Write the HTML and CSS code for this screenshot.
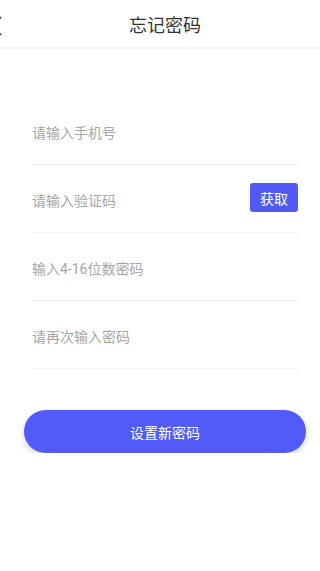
FILE: index.html
```html
<!DOCTYPE html>
<html lang="zh-CN">
<head>
    <meta charset="UTF-8">
    <title>忘记密码</title>
    <link rel="stylesheet" href="styles.css">
</head>
<body>
    <div class="topbar">
        <a class="back" href="#">
            <svg width="12" height="20" viewBox="0 0 12 20"><path d="M10 1 L1.5 10 L10 19" fill="none" stroke="#333" stroke-width="1.6"/></svg>
        </a>
        <h1>忘记密码</h1>
        <span></span>
    </div>

    <form class="form">
        <div class="row">
            <input type="tel" placeholder="请输入手机号">
        </div>
        <div class="row">
            <input type="text" placeholder="请输入验证码">
            <button type="button" class="code-btn">获取</button>
        </div>
        <div class="row">
            <input type="password" placeholder="输入4-16位数密码">
        </div>
        <div class="row">
            <input type="password" placeholder="请再次输入密码">
        </div>
        <button type="button" class="submit">设置新密码</button>
    </form>
</body>
</html>
```

FILE: styles.css
```css
body { margin: 0; background: #fff; font-family: Roboto, "Noto Sans CJK SC", sans-serif; color: #333; }

.topbar {
    height: 47px;
    border-bottom: 2px solid #f5f5f5;
    display: grid;
    grid-template-columns: 40px 1fr 40px;
    align-items: center;
}
.topbar h1 { margin: 0; padding: 4px 0 0 10px; font-size: 18px; font-weight: normal; text-align: center; line-height: 24px; }
.back { display: flex; margin-left: -9px; margin-top: 4px; }

.form { margin-top: 48px; padding: 0 22px 0 32px; }
.row {
    height: 68px;
    box-sizing: border-box;
    padding-top: 4px;
    display: flex;
    align-items: center;
    border-bottom: 1px solid #f3f3f3;
}
.row input {
    flex: 1;
    min-width: 0;
    border: none;
    outline: none;
    padding: 0;
    font-family: inherit;
    font-size: 14px;
    color: #333;
    background: transparent;
}
.row input::placeholder { color: #a6a6a6; }

.code-btn {
    width: 48px;
    height: 29px;
    border: none;
    border-radius: 3px;
    background: #5159f6;
    color: #fff;
    font-family: inherit;
    font-size: 14px;
    padding: 0;
    margin-top: -6px;
}

.submit {
    display: block;
    width: 282px;
    height: 43px;
    margin: 41px 0 0 -8px;
    border: none;
    border-radius: 22px;
    background: #525bf7;
    color: #fff;
    font-family: inherit;
    font-size: 14px;
    box-shadow: 0 3px 6px rgba(0, 0, 0, 0.18);
}
```
